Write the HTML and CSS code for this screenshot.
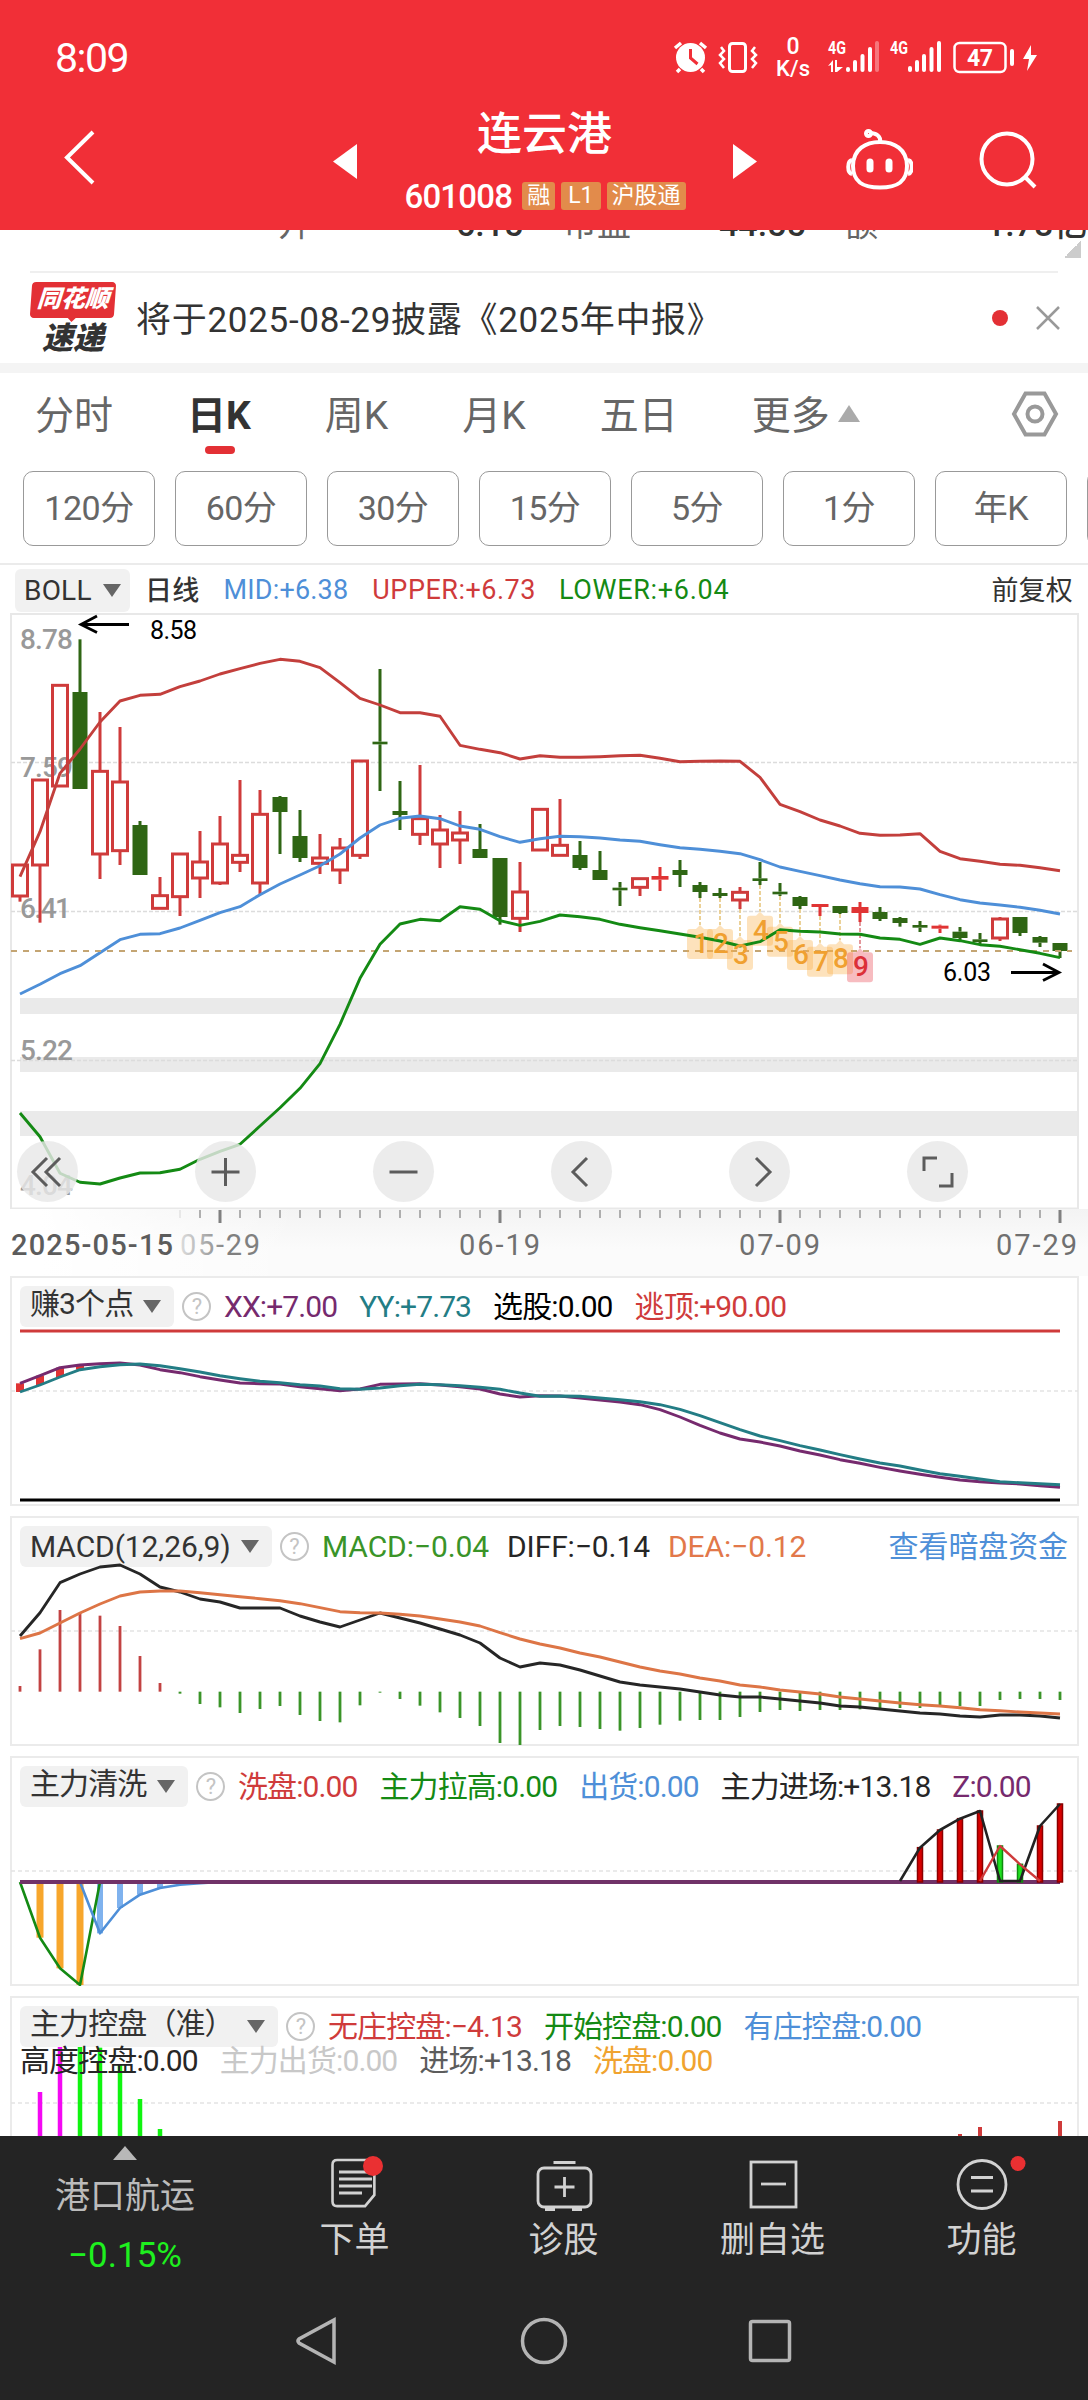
FILE: index.html
```html
<!DOCTYPE html>
<html lang="zh-CN">
  <head>
    <meta charset="UTF-8" />
    <meta name="viewport" content="width=device-width, initial-scale=1.0" />
    <title>连云港 601008</title>
    <link rel="stylesheet" href="styles.css">
  </head>
  <body>
    <div class="phone">
      <header class="header">
        <div class="status-bar">
          <span class="clock">8:09</span>
          <svg class="status-icons" width="380" height="60" viewBox="670 30 380 60">
            <g fill="none" stroke="#fff" stroke-width="3">
              <circle cx="690.5" cy="57.5" r="14.5" fill="#fff" stroke="none" />
              <path d="M675 48l6-5M706 48l-6-5M680 69l-3 3M701 69l3 3" stroke-width="3.5" />
              <path d="M690.5 49v9l7 6" stroke="#f12f37" />
              <rect x="729.5" y="43.5" width="16" height="28" rx="3" />
              <path d="M721 47l3 4-4 4 4 4-4 4 4 5M755 47l-3 4 4 4-4 4 4 4-4 5" stroke-width="2.5" />
              <rect x="954.5" y="43" width="51" height="29" rx="5" stroke-width="2.5" />
            </g>
            <g fill="#fff">
              <rect x="846" y="67" width="4" height="5" rx="2" />
              <rect x="853" y="60" width="4" height="12" rx="2" />
              <rect x="860.5" y="54" width="4" height="18" rx="2" />
              <rect x="868" y="47" width="4" height="25" rx="2" />
              <rect x="875" y="41" width="4" height="31" rx="2" opacity=".35" />
              <path d="M828 66l5-6v12h-2v-7zM835 60h2v7h6l-6 5h-2z" />
              <rect x="908" y="66" width="4" height="6" rx="2" />
              <rect x="915" y="60" width="4" height="12" rx="2" />
              <rect x="922" y="54" width="4" height="18" rx="2" />
              <rect x="929.5" y="47" width="4" height="25" rx="2" />
              <rect x="937" y="41" width="4" height="31" rx="2" />
              <rect x="1010" y="49" width="4" height="17" rx="2" />
              <path d="M1031 45l-8 14h6l-2 12 10-16h-6z" />
              <text class="net-text" x="793" y="54" font-size="23" text-anchor="middle">0</text>
              <text class="net-text" x="776" y="76" font-size="22" textLength="34">K/s</text>
              <text class="net-bold" x="828" y="54" font-size="18" textLength="18" lengthAdjust="spacingAndGlyphs">4G</text>
              <text class="net-bold" x="890" y="54" font-size="18" textLength="18" lengthAdjust="spacingAndGlyphs">4G</text>
              <text class="net-bold" x="967" y="66" font-size="23" textLength="26">47</text>
            </g>
          </svg>
        </div>
        <div class="title-bar">
          <svg class="back" width="40" height="60" viewBox="0 0 40 60"><path d="M32 4L6 29.500l26 25.500" /></svg>
          <svg class="prev" width="24" height="36"><path d="M24 0v35L0 17.5z" /></svg>
          <div class="stock">
            <h1>连云港</h1>
            <div class="code-row">
              <span class="code">601008</span>
              <span class="tag">融</span>
              <span class="tag tag-l1">L1</span>
              <span class="tag">沪股通</span>
            </div>
          </div>
          <svg class="next" width="24" height="36"><path d="M0 0v35l24-17.5z" /></svg>
          <svg class="robot" width="68" height="64" viewBox="844 127 68 64">
            <path d="M879 142c14 0 27 7 27 24 0 16-10 21.500-27 21.500s-27-5.500-27-21.500c0-17 13-24 27-24zM879 142c1-6-4-9-10-9" />
            <path d="M851 160c-5 1-5 13 0 14M907 160c5 1 5 13 0 14" />
            <circle cx="867.500" cy="133.500" r="2.500" />
            <path class="eyes" d="M869 162v7M888 162v7" />
          </svg>
          <svg class="search" width="60" height="60" viewBox="0 0 60 60">
            <circle cx="28" cy="28" r="25.500" />
            <path d="M46 46l10 10" />
          </svg>
        </div>
      </header>

      <div class="quote-strip">
        <span class="q-label q1">开</span><span class="q-num q2">6.15</span>
        <span class="q-label q3">市盈</span><span class="q-num q4">44.55</span>
        <span class="q-label q5">额</span><span class="q-num q6">1.78亿</span>
      </div>
      <div class="corner-row"><i class="corner"></i></div>

      <div class="news">
        <div class="logo">
          <span class="logo-top">同花顺</span>
          <span class="logo-bottom">速递</span>
        </div>
        <p>将于2025-08-29披露《2025年中报》</p>
        <i class="news-dot"></i>
        <svg width="24" height="24" viewBox="0 0 24 24"><path d="M1 1l22 22M23 1L1 23" /></svg>
      </div>

      <nav class="tabs">
        <span>分时</span>
        <span class="active">日K</span>
        <span>周K</span>
        <span>月K</span>
        <span>五日</span>
        <span class="more">更多<i></i></span>
        <svg width="48" height="46" viewBox="0 0 48 46">
          <path d="M14.500 2.500h19L45 23 33.500 43.500h-19L3 23z" />
          <circle cx="24" cy="23" r="7.500" />
        </svg>
      </nav>

      <div class="periods">
        <span>120分</span>
        <span>60分</span>
        <span>30分</span>
        <span>15分</span>
        <span>5分</span>
        <span>1分</span>
        <span>年K</span>
        <span></span>
      </div>

      <div class="boll-row">
        <span class="pill">BOLL<i></i></span>
        <span class="day-line">日线</span>
        <span class="blue mid">MID:+6.38</span>
        <span class="red upper">UPPER:+6.73</span>
        <span class="green lower">LOWER:+6.04</span>
        <span class="adjust">前复权</span>
      </div>

      <div class="main-chart">
        <svg id="kline" width="1088" height="596" viewBox="0 613 1088 596"></svg>
        <div class="controls">
          <svg viewBox="0 0 61 61"><path d="M30 17L16 31l14 14M43 17L29 31l14 14" /></svg>
          <svg viewBox="0 0 61 61"><path d="M30.500 17v28M16.500 31h28" /></svg>
          <svg viewBox="0 0 61 61"><path d="M16.500 31h28" /></svg>
          <svg viewBox="0 0 61 61"><path d="M36 17L22 31l14 14" /></svg>
          <svg viewBox="0 0 61 61"><path d="M27 17l14 14-14 14" /></svg>
          <svg viewBox="0 0 61 61"><path d="M30 17H17v13M45 32v13H32" /></svg>
        </div>
      </div>
      <svg id="axis" class="axis" width="1088" height="67" viewBox="0 1209 1088 67"></svg>

      <section class="panel">
        <svg id="profit" class="plot" viewBox="10 1276 1069 230"></svg>
        <div class="legend">
          <span class="pill cn-pill w1">赚3个点<i></i></span><b class="help">?</b>
          <span class="purple">XX:+7.00</span>
          <span class="teal">YY:+7.73</span>
          <span class="black cn">选股:0.00</span>
          <span class="red cn">逃顶:+90.00</span>
        </div>
      </section>

      <section class="panel">
        <div class="legend macd">
          <span class="pill w2">MACD(12,26,9)<i></i></span><b class="help">?</b>
          <span class="leaf">MACD:−0.04</span>
          <span class="dark">DIFF:−0.14</span>
          <span class="orange">DEA:−0.12</span>
          <span class="blue link cn">查看暗盘资金</span>
        </div>
        <svg id="macd" class="plot" viewBox="10 1516 1069 230"></svg>
      </section>

      <section class="panel">
        <svg id="wash" class="plot" viewBox="10 1756 1069 230"></svg>
        <div class="legend">
          <span class="pill cn-pill w3">主力清洗<i></i></span><b class="help">?</b>
          <span class="red cn">洗盘:0.00</span>
          <span class="green cn">主力拉高:0.00</span>
          <span class="blue cn">出货:0.00</span>
          <span class="dark cn">主力进场:+13.18</span>
          <span class="purple">Z:0.00</span>
        </div>
      </section>

      <section class="panel last">
        <svg id="control" class="plot" viewBox="10 1996 1069 230"></svg>
        <div class="legend">
          <span class="pill cn-pill w4">主力控盘（准）<i></i></span><b class="help">?</b>
          <span class="red cn">无庄控盘:−4.13</span>
          <span class="green cn">开始控盘:0.00</span>
          <span class="blue cn">有庄控盘:0.00</span>
        </div>
        <div class="legend second">
          <span class="dark">高度控盘:0.00</span>
          <span class="silver">主力出货:0.00</span>
          <span class="gray">进场:+13.18</span>
          <span class="amber">洗盘:0.00</span>
        </div>
      </section>

      <footer class="footer">
        <div class="tools">
          <div class="sector">
            <i class="up"></i>
            <span>港口航运</span>
            <em>−0.15%</em>
          </div>
          <div class="tool">
            <svg width="60" height="60" viewBox="0 0 60 60">
              <path d="M12 6.500h35q5 0 5 5V44L42 56H12q-5 0-5-5V11.500q0-5 5-5z" transform="translate(1 1) scale(.93)" />
              <path d="M14 19h33M14 26h33M14 33h33M14 40h23" />
              <circle class="dot" cx="48" cy="13" r="10" />
            </svg>
            <span>下单</span>
          </div>
          <div class="tool">
            <svg width="60" height="60" viewBox="0 0 60 60">
              <rect x="4" y="15" width="53" height="39" rx="6" />
              <path d="M19.500 9.500h22M30.500 24v20M20.500 34h20" />
              <path d="M11 56.500h10M38 56.500h10" />
            </svg>
            <span>诊股</span>
          </div>
          <div class="tool">
            <svg width="60" height="60" viewBox="0 0 60 60">
              <rect x="8" y="9" width="45" height="45" />
              <path d="M18 31h25" />
            </svg>
            <span>删自选</span>
          </div>
          <div class="tool">
            <svg width="96" height="60" viewBox="-18 0 96 60">
              <circle cx="30" cy="31.500" r="24" />
              <path d="M19 24.500h22M19 38h22" />
              <circle class="dot" cx="66" cy="10.500" r="7.500" />
            </svg>
            <span>功能</span>
          </div>
        </div>
        <div class="system-nav">
          <svg width="48" height="52" viewBox="0 0 48 52"><path d="M40 5v42L5 28q-2-2 0-4z" /></svg>
          <svg width="48" height="52" viewBox="0 0 48 52"><circle cx="24" cy="26" r="21.500" /></svg>
          <svg width="48" height="52" viewBox="0 0 48 52"><rect x="4.500" y="6.500" width="39" height="39" rx="2" /></svg>
        </div>
      </footer>
    </div>
    <script src="chart.js"></script>
  </body>
</html>
```
FILE: styles.css
```css
* {
  box-sizing: border-box;
}

body {
  margin: 0;
  background: #fff;
  font-family: Roboto, "Noto Sans CJK SC", sans-serif;
  color: #333;
}

i,
em {
  font-style: normal;
}

svg {
  display: block;
  flex: none;
}

.phone {
  width: 1088px;
  height: 2400px;
  overflow: hidden;
  display: flex;
  flex-direction: column;
}

.phone > * {
  flex: none;
}

/* Header */
.header {
  height: 230px;
  background: #f12f37;
  color: #fff;
}

.status-bar {
  display: flex;
  justify-content: space-between;
  height: 90px;
  padding: 30px 38px 0 55px;
}

.clock {
  font-size: 41px;
  line-height: 57px;
  letter-spacing: -1.5px;
}

.net-text {
  font-weight: 500;
}

.net-bold {
  font-weight: 700;
}

.title-bar {
  display: flex;
  height: 140px;
  padding-left: 61px;
}

.title-bar svg {
  fill: none;
  stroke: #fff;
  stroke-width: 4;
}

.title-bar .prev,
.title-bar .next {
  fill: #fff;
  stroke: none;
  margin-top: 54px;
}

.title-bar .back {
  margin-top: 38px;
}

.title-bar .prev {
  margin-left: 232px;
}

.stock {
  width: 376px;
}

.stock h1 {
  margin: 15px 0 0 -1px;
  font-size: 45px;
  font-weight: 500;
  line-height: 60px;
  text-align: center;
}

.code-row {
  display: flex;
  align-items: center;
  justify-content: center;
  gap: 6px;
  height: 44px;
  margin-top: 9px;
}

.code {
  font-size: 33px;
  font-weight: 500;
  letter-spacing: -0.8px;
  margin-right: 4px;
}

.tag {
  height: 28px;
  padding: 0 5px;
  background: #e28b4b;
  border-radius: 3px;
  font-size: 23px;
  line-height: 27px;
}

.tag-l1 {
  padding: 0 7px;
}

.title-bar .robot {
  margin: 37px 0 0 88px;
}

.robot .eyes {
  stroke-width: 7;
  stroke-linecap: round;
}

.title-bar .search {
  margin: 41px 0 0 66px;
}

/* Row of figures sliding under the header */
.quote-strip {
  position: relative;
  display: flex;
  height: 11px;
  overflow: hidden;
  font-size: 34px;
  line-height: 44px;
}

.quote-strip span {
  flex: none;
  height: 44px;
  margin-top: -28px;
  white-space: nowrap;
}

.q-label {
  color: #666;
}

.q-num {
  font-weight: 500;
}

.q1 {
  width: 178px;
  margin-left: 278px;
}

.q2 {
  width: 107px;
}

.q3 {
  width: 156px;
}

.q4 {
  width: 125px;
}

.q5 {
  width: 142px;
}

.corner-row {
  display: flex;
  justify-content: flex-end;
  height: 32px;
  margin: 0 30px;
  border-bottom: 2px solid #efefef;
}

.corner {
  width: 17px;
  height: 17px;
  margin-right: -23px;
  background: linear-gradient(135deg, transparent 50%, #ccc 50%);
}

/* News */
.news {
  display: flex;
  align-items: center;
  height: 100px;
  padding: 0 28px 0 31px;
  border-bottom: 10px solid #f4f4f4;
}

.logo {
  width: 84px;
  height: 72px;
  text-align: center;
  font-style: italic;
  font-weight: 900;
}

.logo-top {
  display: block;
  height: 36px;
  background: #e33035;
  border-radius: 4px;
  color: #fff;
  font-size: 24px;
  line-height: 34px;
  transform: skewX(-4deg);
}

/* pointer of the speech bubble */
.logo-top::after {
  content: "";
  display: block;
  width: 0;
  margin: 0 auto;
  border: 6px solid transparent;
  border-top-color: #e33035;
  border-bottom: 0;
}

.logo-bottom {
  display: block;
  font-size: 31px;
  line-height: 42px;
}

.news p {
  flex: 1;
  margin: -4px 0 0 21px;
  font-size: 35px;
  letter-spacing: 0.7px;
}

.news-dot {
  width: 16px;
  height: 16px;
  margin-right: 28px;
  background: #e33035;
  border-radius: 50%;
}

.news svg {
  fill: none;
  stroke: #999;
  stroke-width: 2.5;
}

/* Tabs */
.tabs {
  display: flex;
  align-items: center;
  gap: 74px;
  height: 82px;
  padding: 0 29px 0 35px;
  font-size: 39px;
  color: #666;
}

.tabs > span {
  margin-top: -5px;
}

.tabs .active {
  position: relative;
  color: #333;
  font-weight: 700;
}

.tabs .active::after {
  content: "";
  position: absolute;
  left: 18px;
  bottom: -14px;
  width: 30px;
  height: 8px;
  border-radius: 4px;
  background: #e33035;
}

.more {
  display: flex;
  align-items: center;
  gap: 8px;
  flex: 1;
}

.more i {
  margin-top: 3px;
  border: 11px solid transparent;
  border-top: 0;
  border-bottom: 17px solid #aaa;
}

.tabs svg {
  fill: none;
  stroke: #999;
  stroke-width: 4;
}

/* Period buttons */
.periods {
  display: flex;
  gap: 20px;
  height: 110px;
  padding: 16px 0 0 23px;
  border-bottom: 2px solid #ebebeb;
  overflow: hidden;
}

.periods span {
  flex: none;
  width: 132px;
  height: 75px;
  border: 1.5px solid #999;
  border-radius: 10px;
  font-size: 34px;
  line-height: 73px;
  letter-spacing: -0.5px;
  text-align: center;
  color: #666;
}

.pill {
  display: flex;
  align-items: center;
  justify-content: space-between;
  background: #f1f1f1;
  border-radius: 6px;
  color: #333;
}

.pill i {
  border: 9px solid transparent;
  border-bottom: 0;
  border-top: 13px solid #666;
}

.cn-pill {
  line-height: 36px;
  align-items: flex-start;
}

.cn-pill i {
  margin-top: 14px;
}

.boll-row {
  display: flex;
  align-items: center;
  height: 48px;
  padding: 2px 15px 0 15px;
  font-size: 27px;
  letter-spacing: 0.2px;
}

.boll-row .pill {
  width: 115px;
  height: 43px;
  padding: 0 9px;
  font-size: 28px;
}

.day-line {
  margin: -3px 0 0 15px;
  font-weight: 500;
}

.mid {
  margin-left: 24px;
}

.upper {
  margin-left: 24px;
  letter-spacing: 0.5px;
}

.lower {
  margin-left: 23px;
  letter-spacing: 0.7px;
}

.adjust {
  margin: -3px 0 0 auto;
}

/* Charts */
.main-chart {
  position: relative;
}

.controls {
  position: absolute;
  left: 17px;
  bottom: 7px;
  display: flex;
  gap: 117px;
}

.controls svg {
  width: 61px;
  height: 61px;
  border-radius: 50%;
  background: rgba(232, 232, 232, 0.82);
  fill: none;
  stroke: #5c5c5c;
  stroke-width: 3;
}

.axis {
  background: linear-gradient(to right, #fff 40px, transparent 300px), linear-gradient(#f3f3f3, #fbfbfb 40px);
}

.chart-text {
  font-size: 28px;
  font-weight: 500;
}

.chart-text.price {
  font-size: 25px;
  font-weight: 400;
}

.chart-text.date {
  font-size: 29px;
  font-weight: 400;
}

.chart-text.first {
  font-weight: 500;
}

.panel {
  position: relative;
  width: 1069px;
  height: 230px;
  margin: 0 0 10px 10px;
  border: 2px solid #ebebeb;
}

.panel.last {
  margin-bottom: 0;
}

.plot {
  position: absolute;
  left: -2px;
  top: -2px;
  width: 1069px;
  height: 230px;
}

.legend {
  position: relative;
  display: flex;
  align-items: center;
  gap: 22px;
  height: 41px;
  margin: 8px 8px 0;
  font-size: 30px;
  letter-spacing: -0.9px;
  white-space: nowrap;
}

.legend.macd {
  gap: 18px;
  letter-spacing: -0.1px;
}

/* the Chinese font sits lower on the line than Roboto */
.legend .cn {
  margin-top: -5px;
}

.legend .pill {
  height: 41px;
  padding: 0 13px 0 10px;
}

.w1 {
  width: 154px;
}

.w2 {
  width: 252px;
}

.w3 {
  width: 168px;
}

.w4 {
  width: 258px;
}

.help {
  width: 29px;
  height: 29px;
  margin: 0 -9px 0 -14px;
  border: 2px solid #c4c4c4;
  border-radius: 50%;
  color: #c4c4c4;
  font-size: 22px;
  font-weight: 400;
  line-height: 26px;
  text-align: center;
}

.macd .help {
  margin: 0 -5px 0 -10px;
}

.legend .link {
  margin-left: auto;
  margin-right: 1px;
}

.legend.second {
  height: 34px;
  margin-top: -6px;
}

.red { color: #cf3b3b; }
.green { color: #148a14; }
.leaf { color: #3a9428; }
.blue { color: #4e8fd8; }
.purple { color: #762a6e; }
.teal { color: #237d85; }
.orange { color: #e2784a; }
.amber { color: #f0a32f; }
.black { color: #000; }
.dark { color: #262626; }
.gray { color: #5c5c5c; }
.silver { color: #c8c8c8; }

/* Footer */
.footer {
  position: relative;
  height: 264px;
  margin-top: -90px;
  background: #242424;
  color: #d2d2d2;
  font-size: 35px;
}

.tools {
  display: flex;
  height: 154px;
}

.sector {
  width: 250px;
  display: flex;
  flex-direction: column;
  align-items: center;
  padding-top: 10px;
  color: #bbb;
}

.sector .up {
  border: 12px solid transparent;
  border-top: 0;
  border-bottom: 14px solid #b8b8b8;
}

.sector span {
  line-height: 60px;
  margin-top: 7px;
}

.sector em {
  color: #1ef01e;
  line-height: 58px;
}

.tool {
  width: 209px;
  display: flex;
  flex-direction: column;
  align-items: center;
  padding-top: 17px;
}

.tool span {
  line-height: 50px;
  margin-top: 3px;
}

.tool svg {
  fill: none;
  stroke: #d2d2d2;
  stroke-width: 2.8;
}

.tool .dot {
  fill: #ea3032;
  stroke: none;
}

.system-nav {
  display: flex;
  justify-content: center;
  gap: 178px;
  padding-top: 25px;
}

.system-nav svg {
  fill: none;
  stroke: #b4b4b4;
  stroke-width: 3.5;
}
```
FILE: chart.js
```js
const NS = "http://www.w3.org/2000/svg";
const STEP = 20; // px between two trading days
const RED = "#cf3b3b";
const GREEN = "#148a14";

const xAt = (i) => 20 + i * STEP;

function add(svg, name, attrs, text) {
  const el = document.createElementNS(NS, name);
  for (const key in attrs) el.setAttribute(key, attrs[key]);
  if (text) el.textContent = text;
  svg.appendChild(el);
  return el;
}

// values are stored in thirds of a pixel below the base line of their panel
function scale(base) {
  return (v) => base + v / 3;
}

function line(svg, values, y, color, width = 2.9, start = 0) {
  const points = values.map((v, i) => `${xAt(i + start)},${y(v).toFixed(1)}`).join(" ");
  add(svg, "polyline", { points, fill: "none", stroke: color, "stroke-width": width, "stroke-linejoin": "round" });
}

function hline(svg, x1, x2, y, color, width, dash) {
  add(svg, "line", { x1, x2, y1: y, y2: y, stroke: color, "stroke-width": width, "stroke-dasharray": dash || "none" });
}

function bar(svg, i, y1, y2, width, color) {
  add(svg, "rect", { x: xAt(i) - width / 2, y: Math.min(y1, y2), width, height: Math.abs(y2 - y1), fill: color });
}

function label(svg, x, y, text, length, color, kind = "") {
  add(svg, "text", { x, y, fill: color, textLength: length, class: `chart-text ${kind}` }, text);
}

/* ---- K line ---- */
// type, high, open/close top, open/close bottom, low (f = filled red)
const candles = [
  ["r", 795, 795, 888, 905], ["r", 540, 540, 795, 968], ["r", 256, 256, 558, 558], ["g", 118, 276, 567, 567],
  ["r", 336, 514, 762, 837], ["r", 381, 546, 752, 795], ["g", 663, 675, 825, 825], ["r", 831, 887, 925, 925],
  ["r", 762, 762, 890, 948], ["r", 693, 786, 834, 894], ["r", 648, 732, 849, 855], ["r", 540, 766, 787, 816],
  ["r", 570, 643, 849, 884], ["g", 588, 591, 636, 762], ["g", 630, 708, 774, 786], ["r", 702, 774, 790, 822],
  ["r", 714, 744, 810, 852], ["r", 483, 483, 766, 777], ["g", 207, 425, 433, 573], ["g", 543, 633, 645, 690],
  ["r", 495, 656, 703, 735], ["r", 645, 690, 732, 804], ["r", 633, 699, 720, 792], ["g", 672, 747, 774, 774],
  ["g", 774, 774, 951, 974], ["r", 786, 876, 955, 996], ["r", 628, 628, 750, 750], ["r", 597, 736, 766, 766],
  ["g", 723, 765, 804, 810], ["g", 753, 810, 840, 840], ["g", 846, 863, 871, 918], ["r", 836, 836, 862, 888],
  ["f", 801, 828, 839, 873], ["g", 780, 810, 825, 861], ["g", 846, 855, 876, 894], ["g", 864, 879, 888, 894],
  ["r", 861, 877, 900, 927], ["g", 786, 835, 843, 855], ["g", 849, 875, 883, 888], ["g", 888, 891, 918, 927],
  ["f", 912, 912, 921, 948], ["g", 918, 918, 939, 942], ["f", 906, 921, 939, 966], ["g", 921, 936, 957, 963],
  ["g", 951, 954, 969, 980], ["g", 963, 975, 983, 996], ["f", 974, 977, 986, 999], ["g", 981, 995, 1014, 1020],
  ["g", 999, 1018, 1026, 1034], ["r", 951, 957, 1014, 1023], ["g", 951, 951, 999, 1008], ["g", 1008, 1011, 1028, 1041],
  ["g", 1029, 1029, 1053, 1074]
];
const upper = [830, 695, 520, 447, 366, 303, 286, 283, 260, 243, 222, 206, 190, 178, 184, 203, 248, 295, 315, 338, 338, 349, 436, 448, 458, 477, 467, 472, 472, 470, 467, 466, 475, 485, 484, 483, 484, 532, 613, 635, 660, 678, 700, 706, 705, 701, 754, 776, 784, 793, 796, 803, 812];
const mid = [1182, 1153, 1121, 1097, 1058, 1019, 1003, 1001, 984, 961, 938, 920, 884, 852, 825, 797, 762, 714, 675, 655, 648, 656, 678, 688, 710, 727, 716, 709, 710, 714, 720, 724, 734, 743, 748, 754, 761, 779, 801, 814, 827, 840, 851, 860, 861, 867, 884, 899, 909, 915, 922, 931, 942];
const lower = [1539, 1610, 1720, 1747, 1752, 1734, 1719, 1718, 1708, 1678, 1654, 1633, 1578, 1523, 1465, 1391, 1273, 1135, 1033, 972, 958, 962, 920, 928, 962, 976, 964, 945, 950, 958, 973, 983, 992, 1002, 1012, 1023, 1038, 1025, 989, 994, 996, 1002, 1003, 1014, 1018, 1033, 1014, 1022, 1034, 1039, 1049, 1060, 1073];

function drawKline() {
  const svg = document.getElementById("kline");
  const y = scale(600);

  [[998, 16], [1057, 15], [1111, 25]].forEach(([top, height]) =>
    add(svg, "rect", { x: 20, y: top, width: 1058, height, fill: "#eaeaea" })
  );
  add(svg, "rect", { x: 11, y: 614, width: 1067, height: 594.5, fill: "none", stroke: "#e8e8e8", "stroke-width": 2 });
  [762.5, 911.5, 1060.5].forEach((v) => hline(svg, 11, 1078, v, "#dcdcdc", 1.3, "4 2"));

  label(svg, 20, 649, "8.78", 53, "#999");
  label(svg, 20, 777, "7.59", 53, "#999");
  label(svg, 20, 918, "6.41", 51, "#999");
  label(svg, 20, 1060, "5.22", 53, "#999");
  label(svg, 20, 1195, "4.04", 53, "#999");

  candles.forEach(([type, high, top, bottom, low], i) => {
    const color = type === "g" ? "#2f6614" : type === "f" ? "#e03434" : RED;
    if (top > high) bar(svg, i, y(high), y(top), 3, color);
    if (low > bottom) bar(svg, i, y(bottom), y(low), 3, color);
    if (type === "r") {
      add(svg, "rect", { x: xAt(i) - 7.5, y: y(top), width: 15, height: y(bottom) - y(top), fill: "none", stroke: color, "stroke-width": 3 });
    } else {
      bar(svg, i, y(top), y(bottom), type === "f" ? 17 : 15, color);
    }
  });

  line(svg, upper, y, "#c33f3c");
  line(svg, mid, y, "#4e8fd8");
  hline(svg, 11, 1072, 951, "#c4a573", 1.8, "6 6");

  // countdown marks: tip of every flag
  const marks = [975, 975, 1008, 935, 968, 1008, 1028, 1021, 1045];
  marks.forEach((tip, n) => {
    const i = 34 + n;
    const last = n === 8;
    const x = xAt(i);
    const t = y(tip);
    add(svg, "line", { x1: x, x2: x, y1: y(candles[i][4]), y2: t, stroke: last ? "#e08a90" : "#e9cc8c", "stroke-width": 1.8, "stroke-dasharray": "4 2" });
    add(svg, "path", {
      d: `M${x} ${t}l4 4h6q3 0 3 3v24q0 3-3 3h-20q-3 0-3-3v-24q0-3 3-3h6z`,
      fill: last ? "rgba(232,70,80,.36)" : "rgba(250,176,70,.36)"
    });
  });
  line(svg, lower, y, GREEN);
  marks.forEach((tip, n) => {
    add(svg, "text", {
      x: xAt(34 + n) + 1, y: y(tip) + 28, "text-anchor": "middle", class: "chart-text",
      fill: n === 8 ? "#dc3038" : "#f0a030"
    }, String(n + 1));
  });

  const arrow = { fill: "none", stroke: "#000", "stroke-width": 2.8 };
  add(svg, "path", { ...arrow, d: "M129 624.5H81M97 616l-16 8.500 16 8" });
  add(svg, "path", { ...arrow, d: "M1011 972.5h48M1043 964l16 8.500-16 8" });
  label(svg, 150, 639, "8.58", 47, "#000", "price");
  label(svg, 943, 981, "6.03", 48, "#000", "price");
}

function drawAxis() {
  const svg = document.getElementById("axis");
  for (let i = 8; i <= 52; i++) {
    const major = [10, 24, 38, 52].includes(i);
    bar(svg, i, 1210, major ? 1223 : 1218, major ? 3 : 1.2, i === 8 ? "#ddd" : "#808080");
  }
  label(svg, 11, 1255, "2025-05-15", 162, "#5c5c5c", "date first");
  const fade = add(svg, "linearGradient", { id: "fade" });
  add(fade, "stop", { offset: 0, "stop-color": "#ddd" });
  add(fade, "stop", { offset: 0.6, "stop-color": "#808080" });
  label(svg, 180, 1255, "05-29", 80, "url(#fade)", "date");
  label(svg, 459, 1255, "06-19", 81, "#707070", "date");
  label(svg, 739, 1255, "07-09", 81, "#707070", "date");
  label(svg, 996, 1255, "07-29", 81, "#707070", "date");
}

/* ---- Indicators ---- */
const xx = [340, 317, 293, 285, 281, 279, 285, 299, 308, 320, 330, 339, 341, 342, 350, 356, 362, 357, 343, 342, 341, 345, 350, 357, 372, 381, 377, 378, 384, 390, 396, 404, 419, 441, 466, 489, 507, 516, 528, 543, 555, 569, 580, 592, 603, 613, 622, 630, 635, 639, 642, 647, 652];
const yy = [366, 345, 321, 299, 290, 284, 282, 287, 296, 306, 317, 326, 334, 338, 344, 348, 356, 358, 354, 347, 343, 344, 347, 352, 358, 369, 379, 378, 379, 384, 389, 395, 404, 418, 437, 458, 479, 498, 512, 527, 540, 554, 567, 579, 588, 600, 611, 619, 627, 635, 638, 641, 644];
const diff = [378, 308, 218, 192, 171, 165, 192, 231, 246, 267, 276, 294, 294, 294, 318, 336, 351, 330, 309, 324, 339, 357, 375, 399, 444, 471, 459, 465, 480, 498, 516, 525, 531, 537, 546, 555, 561, 561, 567, 573, 579, 588, 591, 597, 603, 609, 612, 618, 621, 615, 615, 618, 624];
const dea = [386, 369, 339, 309, 282, 258, 246, 243, 243, 248, 254, 260, 266, 272, 281, 293, 305, 308, 309, 313, 318, 327, 336, 348, 368, 387, 402, 414, 429, 441, 456, 471, 483, 492, 504, 513, 525, 531, 540, 546, 552, 561, 567, 573, 579, 584, 588, 593, 599, 602, 606, 609, 612];
const macdBars = [528, 418, 300, 309, 317, 348, 438, 519, 551, 582, 592, 609, 597, 588, 615, 633, 637, 586, 548, 567, 587, 607, 624, 648, 699, 705, 660, 648, 651, 657, 662, 654, 644, 632, 630, 630, 621, 606, 600, 603, 600, 600, 598, 597, 594, 594, 588, 588, 588, 570, 567, 567, 570];

function drawProfit() {
  const svg = document.getElementById("profit");
  const y = scale(1270);
  hline(svg, 11, 1078, 1391, "#e4e4e4", 1.5, "4 3");
  hline(svg, 20, 1060, 1331, RED, 3);
  hline(svg, 20, 1060, 1500, "#000", 3);
  for (let i = 0; i < 4; i++) bar(svg, i, y(xx[i]), y(yy[i]), 8, "#e03434");
  line(svg, xx, y, "#762a6e");
  line(svg, yy, y, "#237d85");
}

function drawMacd() {
  const svg = document.getElementById("macd");
  const y = scale(1510);
  hline(svg, 11, 1078, 1631, "#e4e4e4", 1.5, "4 3");
  macdBars.forEach((v, i) => bar(svg, i, y(545), y(v), 2.8, v < 545 ? "#c24242" : "#3a9428"));
  line(svg, diff, y, "#262626");
  line(svg, dea, y, "#dd7546");
}

function drawWash() {
  const svg = document.getElementById("wash");
  const y = scale(1750);
  hline(svg, 11, 1078, 1871, "#e4e4e4", 1.5, "4 3");
  [[1, 563], [2, 655], [3, 705]].forEach(([i, v]) => bar(svg, i, y(396), y(v), 7, "#f7a62c"));
  [[4, 550], [5, 474], [6, 434], [7, 414]].forEach(([i, v]) => bar(svg, i, y(396), y(v), 6, "#7fb2ee"));
  line(svg, [396, 563, 655, 705, 396], y, GREEN, 2.6);
  line(svg, [396, 550, 474, 434, 414, 404, 400, 396], y, "#4e8fd8", 2.6, 3);
  hline(svg, 20, 1060, 1882, "#703268", 4);

  const column = (i, v, fill, stroke) =>
    add(svg, "rect", { x: xAt(i) - 2.5, y: y(v), width: 5, height: y(396) - y(v), fill, stroke, "stroke-width": 1.5 });
  [[45, 293], [46, 240], [47, 206], [48, 183], [51, 228], [52, 162]].forEach(([i, v]) => column(i, v, "#d80000", "#8a0000"));
  [[49, 288], [50, 343]].forEach(([i, v]) => column(i, v, "#1fe01f", "#0f8a0f"));
  line(svg, [393, 293, 240, 206, 183, 393, 393, 228, 162], y, "#222", 2.6, 44);
  line(svg, [393, 288, 343, 393], y, RED, 2.4, 48);
}

function drawControl() {
  const svg = document.getElementById("control");
  const y = scale(1750);
  hline(svg, 11, 1078, 2103, "#e4e4e4", 1.5, "4 3");
  [[1, 1026], [2, 882]].forEach(([i, v]) => bar(svg, i, y(v), 2226, 4.5, "#f408f4"));
  [[3, 891], [4, 893], [5, 945], [6, 1047], [7, 1137]].forEach(([i, v]) => bar(svg, i, y(v), 2226, 4.5, "#10f410"));
  [[47, 1152], [48, 1131], [52, 1113]].forEach(([i, v]) => bar(svg, i, y(v), 2226, 4, RED));
}

drawKline();
drawAxis();
drawProfit();
drawMacd();
drawWash();
drawControl();
```
